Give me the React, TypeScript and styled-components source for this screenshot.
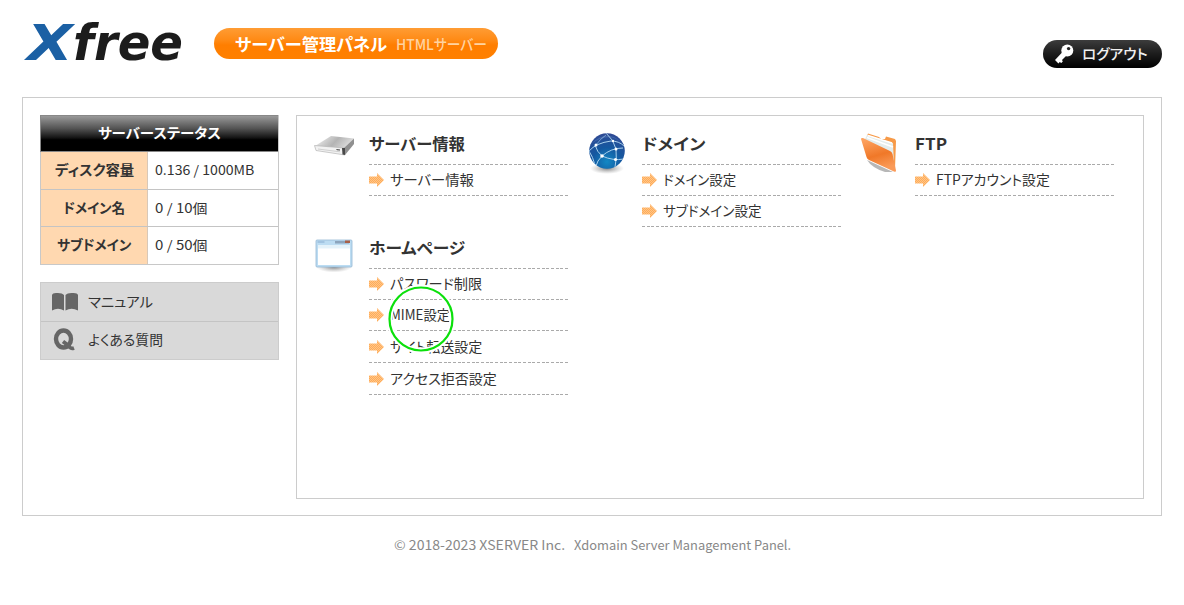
import React, { useLayoutEffect, useRef, useState } from "react";
import styled, { createGlobalStyle } from "styled-components";

const GlobalStyle = createGlobalStyle`
  * { box-sizing: border-box; }
  body {
    margin: 0;
    background: #fff;
    color: #333;
    font-family: "Liberation Sans", "Noto Sans CJK JP", sans-serif;
    font-size: 14px;
    overflow: hidden;
  }
`;

/* ---------- text fitted to a given width ---------- */

const FitBox = styled.span<{ $w: number }>`
  display: inline-block;
  flex: none;
  width: ${(p) => p.$w}px;
  white-space: pre;
`;

const FitText = styled.span`
  display: inline-block;
  transform-origin: 0 50%;
  font-feature-settings: "palt";
`;

function Fit({ w, children, className }: { w: number; children: string; className?: string }) {
  const ref = useRef<HTMLSpanElement>(null);
  const [scale, setScale] = useState(1);
  useLayoutEffect(() => {
    if (ref.current) setScale(w / ref.current.offsetWidth);
  }, [w, children]);
  return (
    <FitBox $w={w} className={className}>
      <FitText ref={ref} style={{ transform: `scaleX(${scale})` }}>
        {children}
      </FitText>
    </FitBox>
  );
}

/* ---------- header ---------- */

const Page = styled.div`
  width: 1184px;
  height: 605px;
  padding: 0 22px;
  position: relative;
`;

const Header = styled.header`
  display: flex;
  align-items: flex-start;
  height: 97px;
`;

const Logo = styled.h1`
  display: flex;
  margin: 15px 0 0 5px;
  width: 187px;
  height: 58px;
  font: italic bold 49px/58px "DejaVu Sans", sans-serif;
  color: #1c1c1c;
`;

const LogoX = styled(Fit)`
  color: #1b60a4;
`;

const Badge = styled.div`
  display: flex;
  align-items: center;
  gap: 9px;
  width: 284px;
  height: 31px;
  margin-top: 28px;
  padding-left: 21px;
  border-radius: 16px;
  background: linear-gradient(#ff9c34, #ff8a14 40%, #ff7e00 55%, #ff8000);
`;

const BadgeTitle = styled(Fit)`
  font: bold 17px/30px "Noto Sans CJK JP", sans-serif;
  color: #fff;
`;

const BadgeSub = styled(Fit)`
  font: 500 15px/29px "Noto Sans CJK JP", sans-serif;
  color: #ffd3a0;
`;

const Logout = styled.a`
  display: flex;
  align-items: center;
  gap: 7px;
  width: 119px;
  height: 28px;
  margin: 40px 0 0 auto;
  padding: 0 0 1px 11px;
  border-radius: 14px;
  background: linear-gradient(#3c3c3c, #1c1c1c 50%, #000);
  color: #f0f0f0;
  font: 500 14px/24px "Noto Sans CJK JP", sans-serif;
  & > span { padding-bottom: 2px; }
`;

/* ---------- frame ---------- */

const Frame = styled.div`
  display: flex;
  gap: 17px;
  width: 1140px;
  height: 419px;
  padding: 17px;
  border: 1px solid #ccc;
`;

const Sidebar = styled.aside`
  width: 239px;
  flex: none;
`;

const Status = styled.section`
  height: 150px;
  border: 1px solid #c8c8c8;
`;

const StatusHead = styled.div`
  display: flex;
  justify-content: center;
  height: 37px;
  margin: -1px 0 0 -1px;
  border: 1px solid #888;
  border-right: 0;
  background: linear-gradient(#999 0%, #555 35%, #141414 62%, #000 68%);
  color: #fff;
  font: bold 14px/33px "Noto Sans CJK JP", sans-serif;
`;

const StatusRow = styled.div`
  display: flex;
  height: 37px;
  & + & { border-top: 1px solid #c4c4c4; }
  &:last-child { height: 38px; }
`;

const StatusName = styled.div`
  display: flex;
  justify-content: center;
  width: 107px;
  border-right: 1px solid #d8c8b8;
  background: #ffd8b0;
  font: bold 14px/35px "Noto Sans CJK JP", sans-serif;
`;

const StatusValue = styled.div`
  padding-left: 7px;
  font: 13px/36px "Noto Sans CJK JP", sans-serif;
`;

const Help = styled.nav`
  height: 78px;
  margin-top: 17px;
  border: 1px solid #ccc;
  background: #d9d9d9;
`;

const HelpItem = styled.a`
  display: flex;
  align-items: center;
  height: 38px;
  padding: 0 0 1px 10px;
  gap: 9px;
  font: 14px/34px "Noto Sans CJK JP", sans-serif;
  & > span { padding-bottom: 2px; }
  & + & { border-top: 1px solid #c4c4c4; }
`;

const Panel = styled.main`
  display: flex;
  width: 849px;
  height: 384px;
  padding: 15px 0 0 17px;
  border: 1px solid #ccc;
`;

const Column = styled.div<{ $w: number }>`
  display: flex;
  flex-direction: column;
  gap: 10px;
  width: ${(p) => p.$w}px;
`;

const Group = styled.section<{ $gap: number }>`
  display: flex;
  gap: ${(p) => p.$gap}px;
  min-height: 94px;
`;

const IconSlot = styled.div`
  width: 42px;
  flex: none;
`;

const Dashed = styled.div`
  height: 1px;
  background: repeating-linear-gradient(90deg, #aaa 0 3px, transparent 3px 4.67px);
`;

const GroupTitle = styled.h2`
  display: flex;
  height: 33px;
  margin: 0;
  font: bold 16px/25px "Noto Sans CJK JP", sans-serif;
`;

const List = styled.div`
  width: 199px;
`;

const Item = styled.a<{ $first: boolean }>`
  display: flex;
  align-items: center;
  gap: 6px;
  height: ${(p) => (p.$first ? 29.6 : 30.8)}px;
  font: 14px/26px "Noto Sans CJK JP", sans-serif;
  & > span { padding-bottom: 1.4px; }
`;

const Footer = styled.footer`
  display: flex;
  justify-content: center;
  gap: 9px;
  margin-top: 18px;
  color: #888;
  font: 13px/22px "Noto Sans CJK JP", sans-serif;
`;

const Marker = styled.svg`
  position: absolute;
  left: 385px;
  top: 283px;
`;

/* ---------- drawings ---------- */

const Arrow = () => (
  <svg width="15" height="14" viewBox="0 0 15 14">
    <defs>
      <pattern id="weave" width="2" height="2" patternUnits="userSpaceOnUse">
        <rect width="2" height="2" fill="#ffc588" />
        <rect width="1" height="1" fill="#ffac58" />
        <rect x="1" y="1" width="1" height="1" fill="#ffac58" />
      </pattern>
    </defs>
    <path d="M0 3.5H8V0L15 7L8 14V10.5H0Z" fill="url(#weave)" />
  </svg>
);

const KeyIcon = () => (
  <svg width="21" height="22" viewBox="0 0 21 22">
    <circle cx="13.3" cy="7.5" r="6" fill="#fff" />
    <circle cx="14.6" cy="5.6" r="1.7" fill="#222" />
    <path d="M8.5 9L12 13L8 17L8.8 18.5L7.3 20L5.7 19L4.5 20.5L1 17Z" fill="#fff" />
  </svg>
);

const BookIcon = () => (
  <svg width="28" height="20" viewBox="0 0 28 20">
    <path d="M1 3Q1.5 1 5 1Q11 0.5 13 3V18.5Q7 15 1 18.5Z M14.5 3Q16.5 0.5 22.5 1Q26.5 1 27 3V18.5Q20.5 15 14.5 18.5Z" fill="#666" />
  </svg>
);

const QIcon = () => (
  <svg width="28" height="26" viewBox="0 0 28 26">
    <ellipse cx="12.5" cy="12" rx="7.5" ry="8.5" fill="none" stroke="#666" strokeWidth="4.4" />
    <path d="M12 14.5L16 17.5L19 20.5Q20.5 22 23 21" fill="none" stroke="#666" strokeWidth="3.8" />
  </svg>
);

const DriveIcon = () => (
  <svg width="42" height="42" viewBox="0 0 42 42">
    <defs>
      <linearGradient id="driveTop" x1="0" y1="0" x2="1" y2="0.3">
        <stop offset="0" stopColor="#f8f8f8" />
        <stop offset="0.6" stopColor="#b4b4b4" />
        <stop offset="1" stopColor="#dcdcdc" />
      </linearGradient>
    </defs>
    <path d="M1 15L17 5L40 7.5L30 17.5Z" fill="url(#driveTop)" />
    <path d="M0.5 14.5L30 17L31 24L2 19.5Z" fill="#f2f2f2" stroke="#b4b4b4" strokeWidth="0.7" />
    <path d="M30 17L40 7.5V13L31 24Z" fill="#909090" />
    <path d="M28 17L31 17V24L28.5 23.6Z" fill="#484848" />
    <path d="M4 18L26 20.8" stroke="#d0d0d0" />
    <path d="M22 18L26 18.4V19.6L23 19.2Z" fill="#444" />
  </svg>
);

const GlobeIcon = () => (
  <svg width="42" height="44" viewBox="0 0 42 44">
    <defs>
      <radialGradient id="globe" cx="0.5" cy="0.8" r="0.8">
        <stop offset="0" stopColor="#1288c4" />
        <stop offset="0.5" stopColor="#1458a0" />
        <stop offset="1" stopColor="#304a94" />
      </radialGradient>
      <radialGradient id="globeShadow">
        <stop offset="0" stopColor="#666" stopOpacity="0.8" />
        <stop offset="1" stopColor="#999" stopOpacity="0" />
      </radialGradient>
      <clipPath id="globeClip"><circle cx="18" cy="20" r="17.8" /></clipPath>
    </defs>
    <ellipse cx="18" cy="37.5" rx="17" ry="5.5" fill="url(#globeShadow)" />
    <circle cx="18" cy="20" r="17.8" fill="url(#globe)" />
    <g clipPath="url(#globeClip)">
      <path d="M2 13Q18 -3 33 12Q20 0 2 13Z" fill="#5a80c0" opacity="0.5" />
      <g fill="none" stroke="#a8d0ec" strokeWidth="1">
        <path d="M0 20Q7 12 22 10Q30 10 35 15" />
        <path d="M17 2Q25 9 27 18Q28 27 26 36" />
        <path d="M6 14Q8 21 13 25Q24 30 35 28" />
        <path d="M7 14Q11 8 17 4" opacity="0.6" />
        <path d="M0 20Q4 26 6 34M13 25Q22 17 34 17M13 25Q8 30 7 35" />
      </g>
      <g fill="#fff">
        <circle cx="7" cy="14" r="1.5" /><circle cx="24" cy="10" r="1.2" />
        <circle cx="13" cy="25" r="1.8" /><circle cx="27" cy="18" r="1.5" /><circle cx="26.5" cy="28.5" r="1.5" />
      </g>
    </g>
  </svg>
);

const FolderIcon = () => (
  <svg width="42" height="44" viewBox="0 0 42 44">
    <defs>
      <linearGradient id="folderFront" x1="0" y1="0" x2="0.3" y2="1">
        <stop offset="0" stopColor="#ffa868" />
        <stop offset="0.6" stopColor="#f07828" />
        <stop offset="1" stopColor="#fa9a58" />
      </linearGradient>
    </defs>
    <path d="M6 29L32 41L24 41Q11 37 6 29Z" fill="#999" opacity="0.7" />
    <path d="M6 5L7 2.5L18 6L20 8L24 8L25 5.5L34 8L35 10L34 38L12 30Z" fill="#f79a48" />
    <path d="M4 8L6 4L32 12L33 34L10 25Z" fill="#e4eceb" />
    <path d="M6 6.5L32 16M7 4.5L31 12" stroke="#fff" strokeWidth="1.5" />
    <path d="M0 8Q0 6.5 2 7L29 20Q31 21 31.5 23L35 39.5Q35 41.5 33 40.5L8 29Q6 28 5.5 26Z" fill="url(#folderFront)" />
  </svg>
);

const WindowIcon = () => (
  <svg width="42" height="42" viewBox="0 -1 42 42">
    <defs>
      <radialGradient id="windowShadow">
        <stop offset="0" stopColor="#666" stopOpacity="0.8" />
        <stop offset="1" stopColor="#999" stopOpacity="0" />
      </radialGradient>
    </defs>
    <ellipse cx="20" cy="31" rx="18" ry="5.5" fill="url(#windowShadow)" />
    <rect x="2" y="4" width="36" height="27" rx="1" fill="#bcdcf2" stroke="#94b8d4" strokeWidth="0.8" />
    <rect x="3.5" y="5.5" width="7" height="1" fill="#88acd0" />
    <rect x="21" y="5" width="14" height="2.5" fill="#8ca4bc" />
    <rect x="31" y="4.5" width="5" height="2.5" fill="#a86048" />
    <rect x="4" y="9" width="32" height="4" fill="#e4f2fa" />
    <rect x="4" y="12.5" width="32" height="16.5" fill="#fff" />
  </svg>
);

/* ---------- content ---------- */

type Entry = [string, number];

function MenuGroup({ icon, gap, title, items }: { icon: React.ReactNode; gap: number; title: Entry; items: Entry[] }) {
  return (
    <Group $gap={gap}>
      <IconSlot>{icon}</IconSlot>
      <List>
        <GroupTitle><Fit w={title[1]}>{title[0]}</Fit></GroupTitle>
        <Dashed />
        {items.map(([label, w], i) => (
          <React.Fragment key={label}>
            <Item $first={i === 0}><Arrow /><Fit w={w}>{label}</Fit></Item>
            <Dashed />
          </React.Fragment>
        ))}
      </List>
    </Group>
  );
}

const statusRows: [Entry, Entry][] = [
  [["ディスク容量", 79], ["0.136 / 1000MB", 99]],
  [["ドメイン名", 62], ["0 / 10個", 53]],
  [["サブドメイン", 74], ["0 / 50個", 53]],
];

export default function App() {
  return (
    <Page>
      <GlobalStyle />
      <Header>
        <Logo>
          <LogoX w={46}>X</LogoX>
          <Fit w={110}>free</Fit>
        </Logo>
        <Badge>
          <BadgeTitle w={152}>サーバー管理パネル</BadgeTitle>
          <BadgeSub w={91}>HTMLサーバー</BadgeSub>
        </Badge>
        <Logout><KeyIcon /><Fit w={66}>ログアウト</Fit></Logout>
      </Header>
      <Frame>
        <Sidebar>
          <Status>
            <StatusHead><Fit w={123}>サーバーステータス</Fit></StatusHead>
            {statusRows.map(([name, value]) => (
              <StatusRow key={name[0]}>
                <StatusName><Fit w={name[1]}>{name[0]}</Fit></StatusName>
                <StatusValue><Fit w={value[1]}>{value[0]}</Fit></StatusValue>
              </StatusRow>
            ))}
          </Status>
          <Help>
            <HelpItem><BookIcon /><Fit w={65}>マニュアル</Fit></HelpItem>
            <HelpItem><QIcon /><Fit w={75}>よくある質問</Fit></HelpItem>
          </Help>
        </Sidebar>
        <Panel>
          <Column $w={275}>
            <MenuGroup icon={<DriveIcon />} gap={13} title={["サーバー情報", 96]} items={[["サーバー情報", 84]]} />
            <MenuGroup
              icon={<WindowIcon />}
              gap={13}
              title={["ホームページ", 96]}
              items={[["パスワード制限", 92], ["MIME設定", 60], ["サイト転送設定", 92], ["アクセス拒否設定", 107]]}
            />
          </Column>
          <Column $w={272}>
            <MenuGroup icon={<GlobeIcon />} gap={11} title={["ドメイン", 63]} items={[["ドメイン設定", 73], ["サブドメイン設定", 99]]} />
          </Column>
          <Column $w={254}>
            <MenuGroup icon={<FolderIcon />} gap={12} title={["FTP", 32]} items={[["FTPアカウント設定", 114]]} />
          </Column>
        </Panel>
      </Frame>
      <Footer>
        <Fit w={171}>© 2018-2023 XSERVER Inc.</Fit>
        <Fit w={217}>Xdomain Server Management Panel.</Fit>
      </Footer>
      <Marker width="72" height="72" viewBox="0 0 72 72">
        <circle cx="36" cy="36" r="31.5" fill="none" stroke="#fff" strokeWidth="6" />
        <circle cx="36" cy="36" r="31.5" fill="none" stroke="#0be00b" strokeWidth="2.2" />
      </Marker>
    </Page>
  );
}
